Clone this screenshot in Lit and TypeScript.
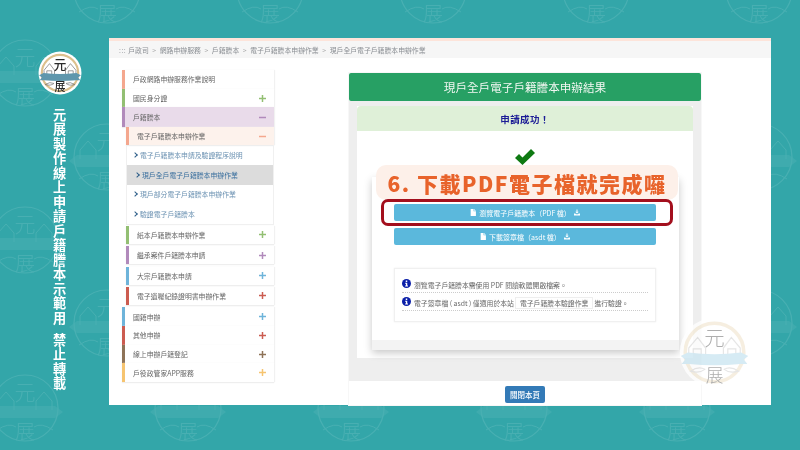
import { LitElement, html, css, svg } from "lit";
import { customElement } from "lit/decorators.js";

const FONT = `"Noto Sans CJK TC","Noto Sans",sans-serif`;

type Row = { t: string; c: string };
const topA: Row[] = [
  { t: "戶政網路申辦服務作業說明", c: "salmon" },
  { t: "國民身分證", c: "green" },
];
const subB: Row[] = [
  { t: "紙本戶籍謄本申辦作業", c: "green" },
  { t: "繼承案件戶籍謄本申請", c: "purple" },
  { t: "大宗戶籍謄本申請", c: "blue" },
  { t: "電子遺囑紀錄證明書申辦作業", c: "red" },
];
const topC: Row[] = [
  { t: "國籍申辦", c: "blue" },
  { t: "其他申辦", c: "red" },
  { t: "線上申辦戶籍登記", c: "brown" },
  { t: "戶役政管家APP服務", c: "yellow" },
];
const links = [
  { t: "電子戶籍謄本申請及驗證程序說明" },
  { t: "現戶全戶電子戶籍謄本申辦作業", active: true },
  { t: "現戶部分電子戶籍謄本申辦作業" },
  { t: "驗證電子戶籍謄本" },
];
const crumbs = ["戶政司", "網路申辦服務", "戶籍謄本", "電子戶籍謄本申辦作業", "現戶全戶電子戶籍謄本申辦作業"];

const marks: [number, number][] = [];
for (let col = 0; col < 5; col++) {
  const x0 = 25 + col * 163;
  const x1 = 107 + col * 163;
  for (const y of [73, 240, 408]) marks.push([x0, y]);
  for (const y of [-10, 157, 323]) marks.push([x1, y]);
}
const visibleMarks = marks.filter(([x, y]) => !(x > 147 && x < 733 && y > 78 && y < 365));

const plus = (c: string) => html`<svg class="pm ${c}" viewBox="0 0 8 8"><path d="M0 4H8M4 0V8" /></svg>`;
const minus = (c: string) => html`<svg class="pm ${c}" viewBox="0 0 8 8"><path d="M0 4H8" /></svg>`;
const docIcon = html`<svg class="ico" viewBox="0 0 10 12"><path d="M1 0H6V4H10V12H1ZM7 0L10 3H7Z" /></svg>`;
const dlIcon = html`<svg class="ico" viewBox="0 0 12 12"><path d="M5 0H7V4.5H9.5L6 8.2L2.5 4.5H5ZM0 8H2.5L4 9.6H8L9.5 8H12V12H0Z" /></svg>`;
const infoIcon = html`<svg class="info" viewBox="0 0 12 12"><circle cx="6" cy="6" r="6" fill="#0b1fa8" /><rect x="5" y="2" width="2" height="2" fill="#fff" /><path d="M4.2 5H7V8.6H8V10H4.2V8.6H5.2V6.2H4.2Z" fill="#fff" /></svg>`;

const wmark = svg`<g fill="none" stroke="#fff">
  <circle r="33" stroke-width="1.2" />
  <path d="M-27 2V-7L-19 -16L-11 -7V2M11 2V-7L19 -16L27 -7V2" stroke-width="1" />
  <path d="M-28 22Q-16 14 -9 19M28 22Q16 14 9 19" stroke-width="1" />
  <path d="M-38 4L-30 -2H30L38 4L30 10H-30Z" fill="#fff" fill-opacity=".6" stroke="none" />
</g>
<text y="-8" text-anchor="middle" font-size="21" font-weight="300" fill="#fff">元</text>
<text y="31" text-anchor="middle" font-size="20" font-weight="300" fill="#fff">展</text>`;

const logo = (ink: string, rib: string, ring: string, detail: string, wt: number) => html`<svg class="logo-svg" viewBox="-40 -40 80 80" font-family=${FONT}>
  <circle r="39" fill="#fff" />
  <circle r="33" fill="#fff" stroke=${ring} stroke-width="4" />
  <g fill="none" stroke=${detail} stroke-width="1.3">
    <path d="M-29 4V-5L-19 -17L-10 -5V4M-24 3V-4H-15V3M10 4V-5L19 -17L29 -5V4M15 3V-4H24V3" />
    <path d="M-27 21Q-18 15 -11 19Q-17 24 -27 21ZM27 21Q18 15 11 19Q17 24 27 21Z" />
  </g>
  <path d="M-38 4L-30 0Q0 4 30 0L38 4L33 8L37 13L29 13Q0 16 -29 13L-37 13L-33 8Z" fill=${rib} />
  <text y="-7" text-anchor="middle" font-size="23" font-weight=${wt} fill=${ink}>元</text>
  <text y="33" text-anchor="middle" font-size="20" font-weight=${wt} fill=${ink}>展</text>
</svg>`;

@customElement("app-root")
export class AppRoot extends LitElement {
  static styles = css`
    :host { display: block; width: 800px; height: 450px; overflow: hidden; font-family: "Noto Sans CJK TC", "Noto Sans", sans-serif; }
    .stage { position: relative; width: 800px; height: 450px; box-sizing: border-box; padding: 38px 29px 45px 0; display: flex; background: #33a6a9; overflow: hidden; filter: blur(.45px); }
    .bg { position: absolute; inset: 0; width: 800px; height: 450px; opacity: .1; }
    .rail { position: relative; width: 109px; flex: none; display: flex; flex-direction: column; align-items: center; padding: 13px 0 0 10px; box-sizing: border-box; }
    .logo { width: 44px; height: 44px; flex: none; }
    .logo-svg { display: block; width: 100%; height: 100%; }
    .vert { margin-top: 13px; display: flex; flex-direction: column; align-items: center; gap: 7px; color: #fff; font-size: 13.2px; font-weight: 700; letter-spacing: 1.3px; line-height: 1; }
    .vert span { writing-mode: vertical-rl; text-orientation: upright; white-space: nowrap; }
    .sheet { position: relative; flex: 1; display: flex; flex-direction: column; background: #fff; border-top: 3px solid #fde4da; min-width: 0; }
    .crumb { flex: none; height: 17px; background: #f6f6f6; display: flex; align-items: center; padding-left: 10px; font-size: 6.85px; color: #8b8f94; white-space: nowrap; }
    .crumb u { text-decoration: none; margin-right: 2px; letter-spacing: .5px; }
    .crumb i { font-style: normal; color: #aaa; width: 11px; text-align: center; }
    .body { flex: 1; display: flex; gap: 75px; padding: 12px 0 0 13px; min-height: 0; }
    .side { width: 152px; flex: none; font-size: 6.85px; color: #666; }
    .row { display: flex; align-items: center; justify-content: space-between; box-sizing: border-box; height: 18.7px; padding: 0 8px; background: #fff; border-left: 3px solid; box-shadow: 0 1px 1px #eee, 1px 0 1px #f2f2f2; }
    .row.sub { height: 18px; margin: 0 0 2.4px 4px; }
    .row.purpleb { background: #e9dbea; height: 20px; }
    .row.orangeb { background: #fdf2ec; margin: 0 0 0 4px; height: 18px; }
    .salmon { border-color: #f4a78e; color: #f4a78e; }
    .green { border-color: #93bf73; color: #93bf73; }
    .purple { border-color: #b18abb; color: #b18abb; }
    .blue { border-color: #6eb4da; color: #6eb4da; }
    .red { border-color: #cc5c50; color: #cc5c50; }
    .brown { border-color: #8e7358; color: #8e7358; }
    .yellow { border-color: #f6c470; color: #f6c470; }
    .row span { color: #666; }
    .pm { width: 7px; height: 7px; fill: none; stroke: currentColor; stroke-width: 1.7; flex: none; }
    .links { margin: 0 0 1px 4px; border: 1px solid #f0f0f0; border-width: 0 1px 1px; }
    .link { display: flex; align-items: center; height: 19.6px; padding-left: 6px; gap: 2px; color: #6d93b3; }
    .link b { display: block; width: 3px; height: 3px; margin-right: 1px; border: solid #2c5d88; border-width: 1.3px 1.3px 0 0; transform: rotate(45deg); flex: none; }
    .link.on { background: #dcdcdc; color: #3a6f9e; padding-left: 8px; }
    .main { width: 352px; flex: none; margin-top: 3px; display: flex; flex-direction: column; align-items: center; box-sizing: border-box; box-shadow: 0 0 0 1px #f7f7f7; }
    .head { width: 100%; height: 28px; background: #27a064; color: #f2f7f2; border-radius: 2px; display: flex; align-items: center; justify-content: center; font-size: 11.6px; flex: none; }
    .panel { width: 100%; height: 280px; background: #eeeeee; box-sizing: border-box; padding: 5px 8px 23px; flex: none; }
    .inner { height: 100%; background: #fff; display: flex; flex-direction: column; align-items: stretch; }
    .ok { height: 25px; flex: none; background: #dff0d8; border-radius: 4px 4px 0 0; display: flex; align-items: center; justify-content: center; color: #1c1c96; font-size: 9.5px; font-weight: 700; letter-spacing: .4px; }
    .check { width: 22px; height: 18px; margin: 17px auto 0; flex: none; display: block; }
    .card { position: relative; margin: 11px 14px 8px 15px; flex: 1; background: #fff; display: flex; flex-direction: column; padding: 27px 23px 0 22px; box-shadow: 0 3px 8px rgba(0,0,0,.22); }
    .foot { position: absolute; left: 0; right: 0; bottom: 0; height: 10px; background: #f3f3f3; }
    .btn { height: 17px; background: #5bb8dc; border-radius: 2px; color: #fff; font-size: 7px; display: flex; align-items: center; justify-content: center; gap: 3px; margin-bottom: 7px; }
    .ico { width: 6px; height: 7px; fill: #fff; flex: none; }
    .note { margin-top: 16px; height: 54px; border: 1px solid #f0f0f0; box-shadow: 0 0 2px #eee; box-sizing: border-box; padding: 6px 7px 0; font-size: 6.85px; color: #666; }
    .line { display: flex; align-items: center; height: 18px; padding-top: 3px; border-bottom: 1px dotted #ccc; box-sizing: border-box; white-space: pre; }
    .info { width: 9px; height: 9px; flex: none; margin-right: 3px; margin-top: -4px; }
    .tag { border: 1px solid #eee; padding: 1px 4px; margin: 0 1px; line-height: 1.2; }
    .callout { position: absolute; left: 4px; top: -12px; width: 302px; height: 35px; background: #fdf0e9; border-radius: 10px; display: flex; align-items: center; justify-content: center; color: #e8632b; font-size: 21px; font-weight: 900; letter-spacing: 1.5px; white-space: pre; }
    .frame { position: absolute; left: 9px; top: 22px; width: 292px; height: 27px; box-sizing: border-box; border: 3px solid #a30f1d; border-radius: 7px; }
    .close { margin-top: 5px; width: 40px; height: 17px; background: #337ab7; border-radius: 2px; color: #fff; font-size: 7.5px; font-weight: 500; display: flex; align-items: center; justify-content: center; flex: none; }
    .seal { position: absolute; left: 679px; top: 317px; width: 71px; height: 71px; opacity: .8; }
  `;

  render() {
    return html`<div class="stage">
      <svg class="bg" viewBox="0 0 800 450" font-family=${FONT}>
        ${visibleMarks.map(([x, y]) => svg`<g transform="translate(${x} ${y})">${wmark}</g>`)}
      </svg>
      <div class="rail">
        <div class="logo">${logo("#2b2b2b", "#5f97ad", "#dcc08d", "#777", 500)}</div>
        <div class="vert"><span>元展製作線上申請戶籍謄本示範用</span><span>禁止轉載</span></div>
      </div>
      <div class="sheet">
        <div class="crumb"><u>:::</u>${crumbs.map((c, i) => html`${i ? html`<i>&gt;</i>` : ""}<span>${c}</span>`)}</div>
        <div class="body">
          <div class="side">
            ${topA.map((r, i) => html`<div class="row ${r.c}"><span>${r.t}</span>${i ? plus(r.c) : ""}</div>`)}
            <div class="row purple purpleb"><span>戶籍謄本</span>${minus("purple")}</div>
            <div class="row salmon orangeb"><span>電子戶籍謄本申辦作業</span>${minus("salmon")}</div>
            <div class="links">
              ${links.map((l) => html`<div class="link ${l.active ? "on" : ""}"><b></b>${l.t}</div>`)}
            </div>
            ${subB.map((r) => html`<div class="row sub ${r.c}"><span>${r.t}</span>${plus(r.c)}</div>`)}
            ${topC.map((r) => html`<div class="row ${r.c}"><span>${r.t}</span>${plus(r.c)}</div>`)}
          </div>
          <div class="main">
            <div class="head">現戶全戶電子戶籍謄本申辦結果</div>
            <div class="panel">
              <div class="inner">
                <div class="ok">申請成功！</div>
                <svg class="check" viewBox="0 0 22 18"><path d="M1 10L5 6L8.5 9.5L17 1L21 5L8.5 17Z" fill="#0e7a12" /></svg>
                <div class="card">
                  <div class="callout">6. 下載PDF電子檔就完成囉</div>
                  <div class="frame"></div>
                  <div class="btn">${docIcon}<span>瀏覽電子戶籍謄本（PDF 檔）</span>${dlIcon}</div>
                  <div class="btn">${docIcon}<span>下載簽章檔（asdt 檔）</span>${dlIcon}</div>
                  <div class="note">
                    <div class="line">${infoIcon}瀏覽電子戶籍謄本需使用 PDF 閱讀軟體開啟檔案。</div>
                    <div class="line">${infoIcon}電子簽章檔 ( asdt ) 僅適用於本站<span class="tag">電子戶籍謄本驗證作業</span>進行驗證。</div>
                  </div>
                  <div class="foot"></div>
                </div>
              </div>
            </div>
            <div class="close">關閉本頁</div>
          </div>
        </div>
      </div>
      <div class="seal">${logo("#9a9a9a", "#cde7f2", "#f4ebd9", "#e0e0e0", 300)}</div>
    </div>`;
  }
}
